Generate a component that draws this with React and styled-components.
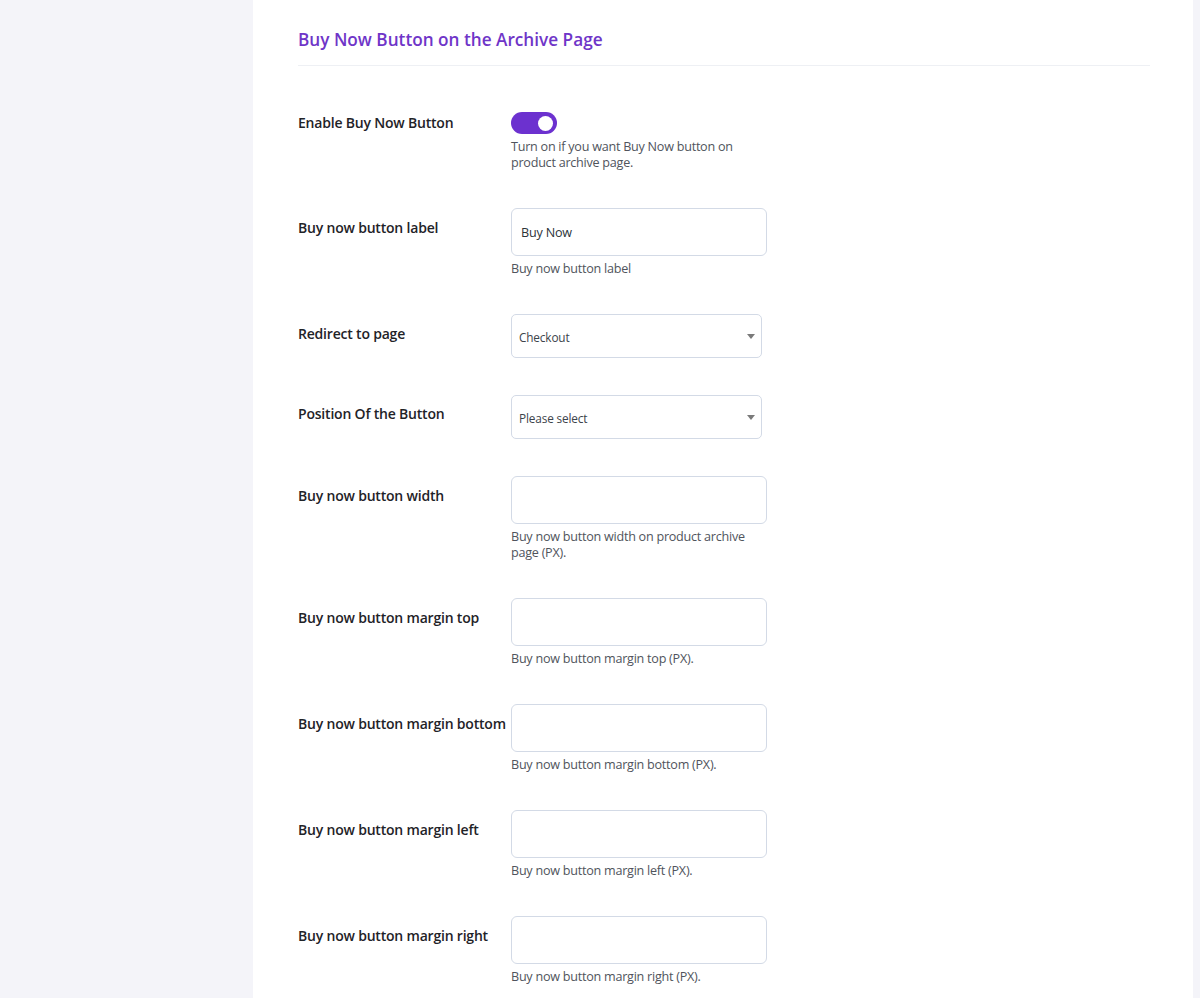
import React from 'react';
import styled, { createGlobalStyle } from 'styled-components';

const GlobalStyle = createGlobalStyle`
  html, body {
    margin: 0;
    padding: 0;
    background: #f4f4f9;
    font-family: "Open Sans", "Noto Sans", sans-serif;
  }
  * { box-sizing: border-box; }
`;

const Page = styled.div`
  display: flex;
  min-height: 998px;
  background: #f4f4f9;
`;

const Sidebar = styled.aside`
  width: 253px;
  flex-shrink: 0;
`;

const Main = styled.main`
  width: 940px;
  background: #ffffff;
  padding: 28px 43px 0 45px;
`;

const Header = styled.div`
  padding-bottom: 13px;
  border-bottom: 1px solid #eef0f4;
`;

const Title = styled.h2`
  margin: 0;
  font-size: 17.2px;
  line-height: 24px;
  font-weight: 600;
  color: #6f35c8;
`;

const Form = styled.div`
  padding-top: 46px;
  display: flex;
  flex-direction: column;
  gap: 37px;
`;

const Row = styled.div`
  display: grid;
  grid-template-columns: 213px 256px;
`;

const Label = styled.label`
  padding-top: ${(p) => p.$offset}px;
  font-size: 14px;
  line-height: 20px;
  font-weight: 600;
  color: #1f2328;
  white-space: nowrap;
  letter-spacing: -0.2px;
`;

const Field = styled.div`
  display: flex;
  flex-direction: column;
`;

const Help = styled.p`
  margin: 5px 0 0;
  font-size: 12.6px;
  line-height: 16px;
  color: #50545c;
  letter-spacing: -0.25px;
`;

const Toggle = styled.button`
  position: relative;
  width: 46px;
  height: 22px;
  padding: 0;
  border: none;
  border-radius: 11px;
  background: ${(p) => (p.$on ? '#6c31cf' : '#c9ccd3')};
  cursor: pointer;

  &::after {
    content: '';
    position: absolute;
    top: 3.5px;
    left: ${(p) => (p.$on ? '27px' : '4px')};
    width: 15px;
    height: 15px;
    border-radius: 50%;
    background: #ffffff;
  }
`;

const TextInput = styled.input`
  width: 256px;
  height: 48px;
  padding: 0 9px;
  border: 1px solid #d3dae6;
  border-radius: 6px;
  background: #fff;
  font-family: inherit;
  font-size: 12.6px;
  letter-spacing: -0.2px;
  color: #2c3338;
  outline: none;
`;

const SelectWrap = styled.div`
  position: relative;
  width: 251px;

  &::after {
    content: '';
    position: absolute;
    right: 7px;
    top: 50%;
    margin-top: -2px;
    border-left: 4px solid transparent;
    border-right: 4px solid transparent;
    border-top: 5px solid #7a7a7a;
    pointer-events: none;
  }
`;

const Select = styled.select`
  width: 100%;
  height: 44px;
  padding: 2px 24px 0 7px;
  border: 1px solid #d3dae6;
  border-radius: 5px;
  background: #fff;
  appearance: none;
  font-family: inherit;
  font-size: 11.8px;
  letter-spacing: -0.15px;
  color: #3c434a;
  outline: none;
`;

const numberFields = [
  { label: 'Buy now button width', help: 'Buy now button width on product archive page (PX).' },
  { label: 'Buy now button margin top', help: 'Buy now button margin top (PX).' },
  { label: 'Buy now button margin bottom', help: 'Buy now button margin bottom (PX).' },
  { label: 'Buy now button margin left', help: 'Buy now button margin left (PX).' },
  { label: 'Buy now button margin right', help: 'Buy now button margin right (PX).' },
];

export default function App() {
  return (
    <>
      <GlobalStyle />
      <Page>
        <Sidebar />
        <Main>
          <Header>
            <Title>Buy Now Button on the Archive Page</Title>
          </Header>
          <Form>
            <Row>
              <Label $offset={1}>Enable Buy Now Button</Label>
              <Field>
                <Toggle type="button" $on aria-pressed="true" />
                <Help>Turn on if you want Buy Now button on product archive page.</Help>
              </Field>
            </Row>
            <Row>
              <Label $offset={10}>Buy now button label</Label>
              <Field>
                <TextInput type="text" defaultValue="Buy Now" />
                <Help>Buy now button label</Help>
              </Field>
            </Row>
            <Row>
              <Label $offset={10}>Redirect to page</Label>
              <Field>
                <SelectWrap>
                  <Select defaultValue="checkout">
                    <option value="checkout">Checkout</option>
                    <option value="cart">Cart</option>
                  </Select>
                </SelectWrap>
              </Field>
            </Row>
            <Row>
              <Label $offset={9}>Position Of the Button</Label>
              <Field>
                <SelectWrap>
                  <Select defaultValue="">
                    <option value="">Please select</option>
                    <option value="before">Before Add to Cart</option>
                    <option value="after">After Add to Cart</option>
                  </Select>
                </SelectWrap>
              </Field>
            </Row>
            {numberFields.map((f) => (
              <Row key={f.label}>
                <Label $offset={10}>{f.label}</Label>
                <Field>
                  <TextInput type="text" />
                  <Help>{f.help}</Help>
                </Field>
              </Row>
            ))}
          </Form>
        </Main>
      </Page>
    </>
  );
}
